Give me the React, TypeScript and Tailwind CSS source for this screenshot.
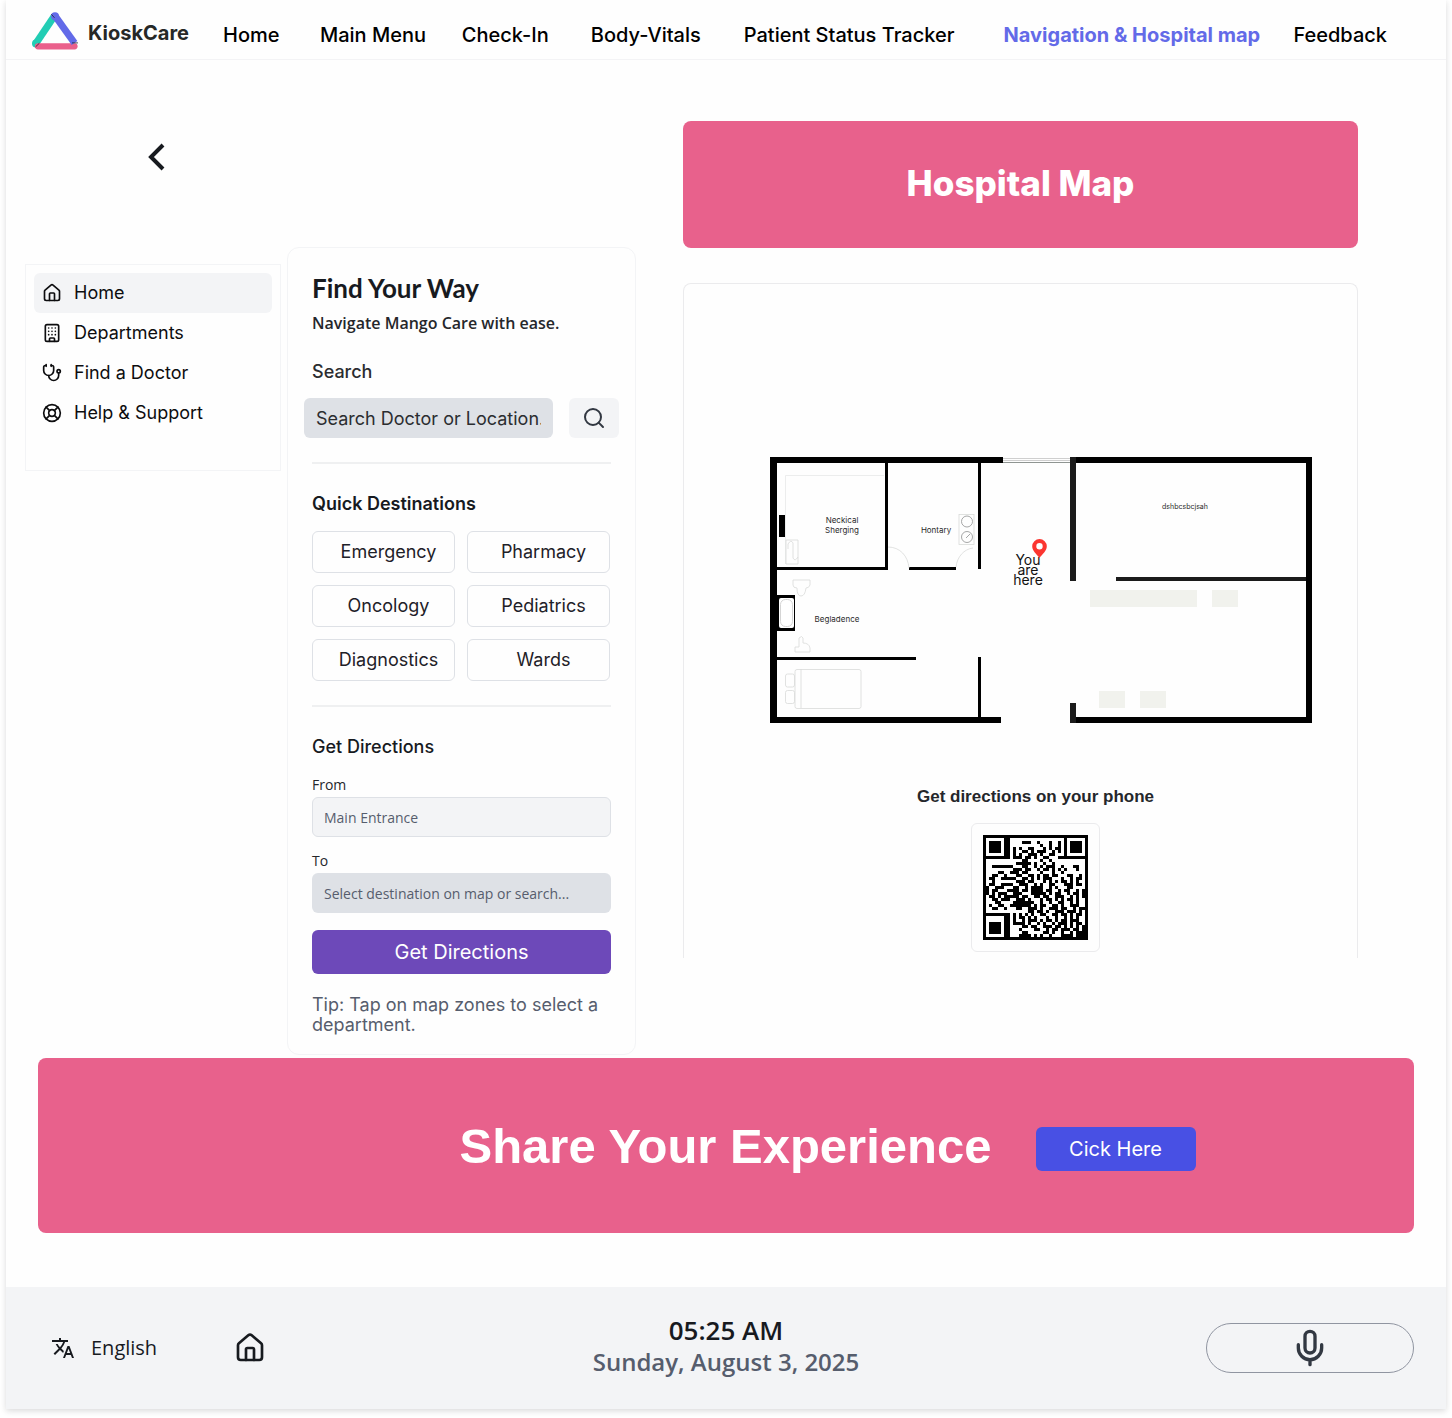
import type { ReactNode } from "react";
import {
  Building,
  ChevronLeft,
  House,
  LifeBuoy,
  Mic,
  Search,
  Stethoscope,
} from "lucide-react";
import { MdTranslate } from "react-icons/md";

const inter = "font-['Inter',sans-serif]";
const openSans = "font-['Open_Sans',sans-serif]";
const grotesk = "font-['Liberation_Sans',Arial,sans-serif]";

const navItems = [
  "Home",
  "Main Menu",
  "Check-In",
  "Body-Vitals",
  "Patient Status Tracker",
  "Navigation & Hospital map",
  "Feedback",
];

function Logo() {
  return (
    <svg viewBox="0 0 46 38" className="h-[38px] w-[46px] shrink-0" fill="none" aria-hidden="true">
      <path d="M22 4.500 4.200 31" stroke="#22cdb4" strokeWidth="7" />
      <circle cx="3.900" cy="31.500" r="3.900" fill="#22cdb4" />
      <path d="M6 34.300H42.500" stroke="#ea608c" strokeWidth="6.200" strokeLinecap="round" />
      <path d="M23.500 4.500 42.500 31" stroke="#626ae8" strokeWidth="7" />
      <circle cx="23" cy="4.200" r="4" fill="#626ae8" />
      <path d="M40 30.900H46M19.300 2.200l3.200 3.600M3.600 34.800l3.800-3.600" stroke="#1e2530" strokeWidth="0.8" />
    </svg>
  );
}

function Header() {
  return (
    <header className="flex h-15 items-center border-b border-[#f3f3f5] pt-0.5 pr-[59px] pl-[26px]">
      <a href="#home" className="flex w-[191px] shrink-0 items-center gap-2.5">
        <Logo />
        <span className="pt-1 text-xl font-bold text-[#262827]">KioskCare</span>
      </a>
      <nav className="grid flex-1 grid-cols-[97fr_142fr_129fr_153fr_260fr_290fr_auto] pt-2 text-xl font-medium whitespace-nowrap text-black">
        {navItems.map((item) => (
          <a
            key={item}
            href="#nav"
            className={item.startsWith("Navigation") ? "font-bold text-[#636ae8]" : ""}
          >
            {item}
          </a>
        ))}
      </nav>
    </header>
  );
}

function SideLink({ icon, label, active }: { icon: ReactNode; label: string; active?: boolean }) {
  return (
    <a
      href="#section"
      className={`flex h-10 items-center gap-3 rounded-md px-2 text-lg text-[#0d0d0f] ${active ? "bg-[#f3f4f6]" : ""}`}
    >
      {icon}
      {label}
    </a>
  );
}

function Sidebar() {
  return (
    <div className="w-[256px] shrink-0">
      <button aria-label="Back" className="mt-3 ml-[108px] block">
        <ChevronLeft className="h-12 w-12 text-[#171a1f]" strokeWidth={2} strokeLinecap="butt" strokeLinejoin="miter" />
      </button>
      <nav className="mt-[83px] h-[207px] border border-[#f3f4f6] p-2">
        <SideLink active label="Home" icon={<House size={20} />} />
        <SideLink label="Departments" icon={<Building size={20} />} />
        <SideLink label="Find a Doctor" icon={<Stethoscope size={20} />} />
        <SideLink label="Help & Support" icon={<LifeBuoy size={20} />} />
      </nav>
    </div>
  );
}

const destinations = ["Emergency", "Pharmacy", "Oncology", "Pediatrics", "Diagnostics", "Wards"];

function FindPanel() {
  return (
    <section className="mt-[126px] w-[349px] shrink-0 rounded-xl border border-[#f3f4f6] px-6 pt-[22px] pb-[19px]">
      <h1 className="font-['Lato',sans-serif] text-[26px] leading-9 font-bold text-[#171a1f]">Find Your Way</h1>
      <p className={`${openSans} mt-[5px] text-base leading-6 font-semibold text-[#25272b]`}>
        Navigate Mango Care with ease.
      </p>
      <label htmlFor="search" className="mt-[25px] block text-lg leading-6 font-medium text-[#2b2d30]">
        Search
      </label>
      <div className="-mx-2 mt-3.5 flex gap-4">
        <input
          id="search"
          placeholder="Search Doctor or Location..."
          className="h-10 w-[249px] rounded-md bg-[#dee1e6] px-3 text-lg text-[#2b2d30] placeholder:text-[#2b2d30]"
        />
        <button aria-label="Search" className="flex h-10 w-[50px] items-center justify-center rounded-md bg-[#f3f4f6]">
          <Search size={24} className="text-[#323842]" strokeWidth={2} />
        </button>
      </div>
      <hr className="mt-6 border-t-2 border-[#eff0f1]" />

      <h2 className="mt-[26px] text-lg leading-7 font-semibold text-[#171a1f]">Quick Destinations</h2>
      <div className="mt-[13px] mr-px grid grid-cols-2 gap-3">
        {destinations.map((name) => (
          <button
            key={name}
            className="h-[42px] rounded-md border border-[#dee1e6] pl-2.5 text-lg text-[#1e2128]"
          >
            {name}
          </button>
        ))}
      </div>
      <hr className="mt-6 border-t-2 border-[#eff0f1]" />

      <h2 className="mt-[26px] text-lg leading-7 font-medium text-[#171a1f]">Get Directions</h2>
      <div className={`${openSans} text-sm`}>
        <label htmlFor="from" className="mt-3.5 block leading-5 text-[#25272b]">
          From
        </label>
        <input
          id="from"
          placeholder="Main Entrance"
          className="mt-0.5 block h-10 w-full rounded-md border border-[#dee1e6] bg-[#f3f4f6] px-[11px] placeholder:text-[#565d6d]"
        />
        <label htmlFor="to" className="mt-3.5 block leading-5 text-[#25272b]">
          To
        </label>
        <input
          id="to"
          placeholder="Select destination on map or search..."
          className="mt-0.5 block h-10 w-full rounded-md bg-[#dee1e6] px-3 placeholder:text-[#565d6d]"
        />
      </div>
      <button className="mt-[17px] block h-11 w-full rounded-md bg-[#6d49b9] text-xl text-white">
        Get Directions
      </button>
      <p className="mt-[21px] text-lg leading-5 text-[#565d6d]">Tip: Tap on map zones to select a department.</p>
    </section>
  );
}

function FloorPlan() {
  return (
    <svg viewBox="0 0 542 266" className="block w-full" fill="none" role="img" aria-label="Hospital floor plan">
      <g fill="#000">
        <path d="M0 0H233V6H7V260H231V266H0Z" />
        <path d="M300 0H542V266H306V260H536V6H300Z" />
        <path d="M115 6h3v107h-3zM7 110h111v3H7zM139 110h47v3h-47zM208 6h3v106h-3zM208 200h3v60h-3zM7 200h139v3H7z" />
        <path d="M9 58h6v22H9zM7 138h18v36H7z" />
      </g>
      <path d="M300 0h6v124h-6zM346 120h190v4H346zM300 246h6v20h-6z" fill="#1b1b1b" />
      <path d="M233 1.500H300M233 3.500H300" stroke="#cfcfcf" />
      <path d="M233 5.500H300" stroke="#8f9592" />
      <rect x="9" y="141" width="15" height="30" rx="2" fill="#fff" />
      <rect x="10.500" y="142.500" width="12" height="27" rx="5" stroke="#d5d5d5" />
      <path d="M320 133h107v17H320zM442 133h26v17h-26zM329 234h26v17h-26zM370 234h26v17h-26z" fill="#f1f2ed" />
      <g stroke="#d9dbd9" strokeWidth="0.8">
        <path d="M15.500 107V18.500H114" stroke="#e7e9e8" />
        <path d="M118 90c12 0 20 9 21 21M186 110c1-10 8-18 17-19" />
        <path d="M16 83h12v24H16zM18 92v-5q3-5 5-1v15q2 4 5-1" />
        <path d="M23 123h17v5q-1 3-4 3-1 8-5 8t-4-8q-4 0-4-3z" />
        <path d="M25 190h4v-9q3-3 4 0v5q6 0 7 5v4H25z" />
        <rect x="25" y="212.500" width="66" height="39" rx="2" />
        <path d="M31 212v39" />
        <rect x="15.500" y="217" width="9" height="13" rx="2" />
        <rect x="15.500" y="233.500" width="9" height="13" rx="2" />
        <rect x="189" y="57.500" width="15" height="30" />
        <g stroke="#8f9191">
          <circle cx="197" cy="64.500" r="5.500" />
          <circle cx="197" cy="80" r="5.500" />
          <path d="m196 81 4-4" />
        </g>
      </g>
      <g className="font-['Inter',sans-serif]" fill="#2a2a2a" fontSize="8" textAnchor="middle">
        <text x="72" y="66">Neckical</text>
        <text x="72" y="76">Sherging</text>
        <text x="166" y="76">Hontary</text>
        <text x="67" y="165">Begladence</text>
        <text x="415" y="52" fontSize="7">dshbcsbcjsah</text>
        <g fill="#111" fontSize="14">
          <text x="258" y="108">You</text>
          <text x="258" y="118">are</text>
          <text x="258" y="128">here</text>
        </g>
      </g>
      <path
        fillRule="evenodd"
        d="M269.500 82a7.300 7.300 0 0 1 7.300 7.300c0 4.500-4.500 8-7.300 11.700-2.800-3.700-7.300-7.200-7.300-11.700A7.300 7.300 0 0 1 269.500 82zm0 4a3.200 3.200 0 1 0 0 6.400 3.200 3.200 0 0 0 0-6.400z"
        fill="#fb3530"
      />
    </svg>
  );
}

const qrRows = [
  "###################################",
  "#......##..................#......#",
  "#.####.##....###..#...#..#.#.####.#",
  "#.####.##..........#..#..#.#.####.#",
  "#.####.##.#.#..##...#.#.##.#.####.#",
  "#.####.##.#..##.#.###..#.#.#.####.#",
  "#......##.#.#..###.#..##...#......#",
  "#########.###.##.#..##...##########",
  "#............##....#..#...........#",
  "#..........#####.#..#..#..........#",
  "#..#######...##..#.#.###..#...##..#",
  "#.........###.##..#.##.#.#.#...#..#",
  "#....##..###.##....#...#..#.......#",
  "#..##..#...##..##.#.##.##...##..#.#",
  "#.##..#####..##.#.#.###...#..#.##.#",
  "#..#.......###.##...#.#.#.##.#.#..#",
  "#.##..####..###..#.#..##...###.##.#",
  "##..###...##..#.####..#.#...##....#",
  "##.##...####.##.####.##..#.##..#.##",
  "##.#.###..###...#####.#.##..#.##.##",
  "#.##.#.#####.##..##.##..###..#.#.##",
  "#..##.###..###.#...#.##.#.#.##.#..#",
  "#...##....#######..#..#..##..#.#..#",
  "#.#..##..#######.#.##..##.#..###..#",
  "#..##..#...##..###.#..###.##..#.###",
  "#..............##.##.#..###.###.#.#",
  "#########.#.#.#.#..##..##.##.#.##.#",
  "#......##.#.##.#.#...#..#..#.#.#..#",
  "#......##.#..#.###.#.##.#.##.###..#",
  "#.####.##.####.#..#.#..#.###.#.##.#",
  "#.####.##....##.##..###.##.#.#.#.##",
  "#.####.##...#....##..#.##.###.##.##",
  "#.####.##....##.....##.#..#..#.####",
  "#......##...####.#.#..#...####.####",
  "###################################",
];

function QrCode() {
  const d = qrRows
    .flatMap((row, y) => [...row].map((cell, x) => (cell === "#" ? `M${x} ${y}h1v1h-1z` : "")))
    .join("");
  return (
    <svg viewBox="0 0 35 35" className="h-[105px] w-[105px]" shapeRendering="crispEdges" role="img" aria-label="QR code">
      <path d={d} fill="#000" />
    </svg>
  );
}

function MapColumn() {
  return (
    <section className="mr-[88px] ml-[47px] flex-1">
      <div className="flex h-[127px] items-center justify-center rounded-lg bg-[#e8618c] pb-0.5">
        <h2 className="text-[35px] font-extrabold text-white">Hospital Map</h2>
      </div>
      <div className="mt-[35px] h-[675px] rounded-t-lg border border-b-0 border-[#ebebed] pt-[173px]">
        <div className="pr-[45px] pl-[86px]">
          <FloorPlan />
        </div>
        <div className="mt-[60px] flex flex-col items-center pl-[30px]">
          <h3 className={`${grotesk} text-[17px] leading-7 font-bold text-[#25272b]`}>Get directions on your phone</h3>
          <div className="mt-3 rounded-md border border-[#ebebed] p-[11px]">
            <QrCode />
          </div>
        </div>
      </div>
    </section>
  );
}

function ShareBanner() {
  return (
    <section className="mx-8 mt-[3px] flex h-[175px] items-center justify-center gap-11 rounded-lg bg-[#e8618c] pt-0.5 pl-[203px]">
      <h2 className={`${grotesk} text-[49px] font-bold whitespace-nowrap text-white`}>Share Your Experience</h2>
      <button className="mt-1 h-11 w-40 rounded-md bg-[#4850e4] text-xl text-white">Cick Here</button>
    </section>
  );
}

function Footer() {
  return (
    <footer
      className={`${openSans} mt-[54px] grid h-[122px] grid-cols-3 items-center bg-[#f3f4f6] px-8 text-[#171a1f]`}
    >
      <div className="flex items-center pl-[13px]">
        <button className="flex items-center gap-4 text-xl">
          <MdTranslate size={24} />
          English
        </button>
        <button aria-label="Home" className="ml-[77px]">
          <House size={32} />
        </button>
      </div>
      <div className="pb-1 text-center whitespace-nowrap">
        <p className="text-[26px] leading-8 font-semibold">05:25 AM</p>
        <p className="text-2xl leading-8 font-semibold text-[#565d6d]">Sunday, August 3, 2025</p>
      </div>
      <button
        aria-label="Voice input"
        className="flex h-[50px] w-52 items-center justify-center justify-self-end rounded-full border border-[#9095a1]"
      >
        <Mic size={40} className="text-[#323842]" />
      </button>
    </footer>
  );
}

export default function App() {
  return (
    <div className={`${inter} bg-white px-1.5 pb-[9px]`}>
      <div className="bg-[#fefefe] shadow-[0_2px_6px_rgba(23,26,31,0.16)]">
        <Header />
        <main>
          <div className="flex items-start pt-[61px] pl-[19px]">
            <Sidebar />
            <div className="w-1.5 shrink-0" />
            <FindPanel />
            <MapColumn />
          </div>
          <ShareBanner />
        </main>
        <Footer />
      </div>
    </div>
  );
}
